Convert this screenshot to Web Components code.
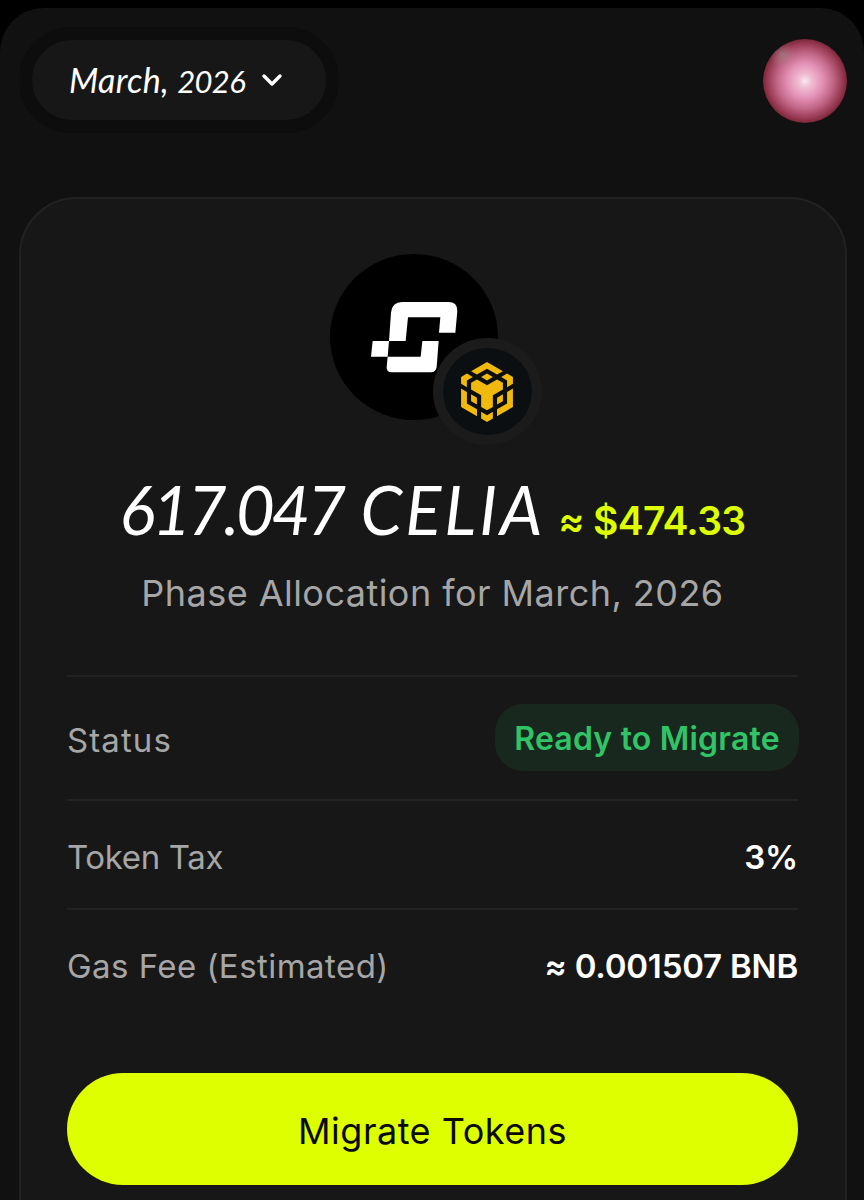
<!DOCTYPE html>
<html lang="en">
<head>
<meta charset="UTF-8" />
<meta name="viewport" content="width=device-width, initial-scale=1.0" />
<title>Migrate Tokens</title>
<style>
  body {
    margin: 0;
    background: #000;
    font-family: Inter, "Liberation Sans", sans-serif;
    color: #fff;
    height: 1200px;
    overflow: hidden;
  }
  .year { font-size: 31px; letter-spacing: -0.7px; }
  .unit { letter-spacing: 3px; margin-left: 5px; }
</style>
</head>
<body>
<app-shell>
  <month-picker slot="header">March, <span class="year">2026</span></month-picker>
  <user-avatar slot="header"></user-avatar>
  <allocation-card>
    <token-logo slot="logo"></token-logo>
    <token-amount slot="amount">617.047 <span class="unit">CELIA</span><span slot="value">≈ $474.33</span></token-amount>
    <span slot="caption">Phase Allocation for March, 2026</span>
    <info-row class="tall" label="Status" style="--ls: 1.1px"><status-pill>Ready to Migrate</status-pill></info-row>
    <info-row label="Token Tax" style="--ls: -0.35px">3%</info-row>
    <info-row label="Gas Fee (Estimated)" style="--ls: 0.45px">≈ 0.001507 BNB</info-row>
    <action-button slot="action">Migrate Tokens</action-button>
  </allocation-card>
</app-shell>

<script>
class AppShell extends HTMLElement {
  constructor() {
    super();
    this.attachShadow({ mode: 'open' }).innerHTML = `
      <style>
        :host {
          display: flex;
          flex-direction: column;
          box-sizing: border-box;
          height: 1192px;
          margin-top: 8px;
          padding: 19px 17px 0 19px;
          background: #111;
          border-radius: 44px 44px 0 0;
          overflow: hidden;
        }
        header {
          display: flex;
          justify-content: space-between;
          align-items: center;
          margin-bottom: 64px;
        }
      </style>
      <header><slot name="header"></slot></header>
      <slot></slot>
    `;
  }
}

class MonthPicker extends HTMLElement {
  constructor() {
    super();
    this.attachShadow({ mode: 'open' }).innerHTML = `
      <style>
        :host {
          display: flex;
          align-items: center;
          box-sizing: border-box;
          width: 320px;
          height: 106px;
          padding-left: 37px;
          border: 13px solid #0d0d0d;
          border-radius: 53px;
          background: #171717;
          font: italic 400 34px/40px Lato, sans-serif;
          letter-spacing: 0.3px;
        }
        span { width: 192px; white-space: nowrap; }
      </style>
      <span><slot></slot></span>
      <svg width="22" height="14" viewBox="0 0 22 14" fill="none" stroke="#fff" stroke-width="3.4" stroke-linecap="round" stroke-linejoin="round">
        <path d="M3 3l8 8 8-8" />
      </svg>
    `;
  }
}

class UserAvatar extends HTMLElement {
  constructor() {
    super();
    this.attachShadow({ mode: 'open' }).innerHTML = `
      <style>
        :host {
          display: block;
          width: 84px;
          height: 84px;
          margin-top: 1px;
          border-radius: 50%;
          background:
            radial-gradient(circle at 23% 19%, rgba(165, 140, 140, 0.6), transparent 14%),
            radial-gradient(circle closest-side, #fae8f0 0%, #f0bdd2 16%, #e290b4 42%, #c26787 66%, #9a3c57 88%, #7c2639 100%);
        }
      </style>
    `;
  }
}

class AllocationCard extends HTMLElement {
  constructor() {
    super();
    this.attachShadow({ mode: 'open' }).innerHTML = `
      <style>
        :host {
          display: flex;
          flex-direction: column;
          box-sizing: border-box;
          height: 1080px;
          flex: none;
          padding: 55px 47px 0 46px;
          border: 2px solid #222;
          border-radius: 58px;
          background: #171717;
        }
        .caption {
          margin: 22px 0 60px;
          text-align: center;
          font-size: 36px;
          line-height: 44px;
          letter-spacing: 0.46px;
          color: #a6a6a6;
          white-space: nowrap;
        }
        .rows { margin-bottom: 56px; }
      </style>
      <slot name="logo"></slot>
      <slot name="amount"></slot>
      <div class="caption"><slot name="caption"></slot></div>
      <div class="rows"><slot></slot></div>
      <slot name="action"></slot>
    `;
  }
}

class TokenLogo extends HTMLElement {
  constructor() {
    super();
    this.attachShadow({ mode: 'open' }).innerHTML = `
      <style>
        :host {
          display: block;
          position: relative;
          width: 168px;
          height: 166px;
          margin-left: 263px;
        }
        .token {
          display: block;
          border-radius: 50%;
          background: #000;
        }
        /* network badge over the corner of the token */
        .chain {
          position: absolute;
          left: 103px;
          top: 84px;
          display: flex;
          align-items: center;
          justify-content: center;
          box-sizing: border-box;
          width: 109px;
          height: 107px;
          padding-right: 1px;
          border: 10px solid #1b1b1b;
          border-radius: 50%;
          background: #0b0f11;
        }
      </style>
      <svg class="token" width="168" height="166" viewBox="30 41 504 498" fill="#fff">
        <path d="M207 302L213 217Q216 185 246 185H385Q413 185 412 213L406 277H357L361 231H264L257 302Z" />
        <path d="M158 302H207L203 349H153Z" />
        <path d="M203 349H302L307 302H356L350 380Q348 396 332 396H215Q199 396 200 380Z" />
      </svg>
      <div class="chain">
        <svg width="60" height="60" viewBox="0 0 24 24" fill="#f0b90b">
          <path d="M5.631 3.676 12.001 0l6.367 3.676-2.34 1.358L12 2.716 7.972 5.034l-2.34-1.358Zm12.737 4.636-2.34-1.358L12 9.272 7.972 6.954l-2.34 1.358v2.716l4.026 2.318v4.636L12 19.341l2.341-1.359v-4.636l4.027-2.318V8.312Zm0 7.352v-2.716l-2.34 1.358v2.716l2.34-1.358Zm1.663.96-4.027 2.318v2.717l6.368-3.677V10.63l-2.34 1.358v4.636Zm-2.34-10.63 2.34 1.358v2.716l2.341-1.358V5.994l-2.34-1.358-2.342 1.358ZM9.657 19.926v2.716L12 24l2.341-1.358v-2.716l-2.34 1.358-2.342-1.358Zm-4.027-4.262 2.34 1.358v-2.716l-2.34-1.358v2.716Zm4.027-9.67L12 7.352l2.341-1.358L12 4.636 9.658 5.994Zm-5.69 1.358 2.34-1.358-2.34-1.358-2.341 1.358V8.71l2.34 1.358V7.352Zm0 4.636L1.627 10.63v7.353l6.368 3.677v-2.717L3.968 16.624v-4.636Z" />
        </svg>
      </div>
    `;
  }
}

class TokenAmount extends HTMLElement {
  constructor() {
    super();
    this.attachShadow({ mode: 'open' }).innerHTML = `
      <style>
        :host {
          display: flex;
          align-items: baseline;
          justify-content: center;
          height: 80px;
          margin-top: 49px;
          gap: 13px;
          white-space: nowrap;
        }
        .amount {
          font: italic 400 67px/80px Lato, sans-serif;
          letter-spacing: -3.2px;
        }
        .value {
          font-size: 39px;
          font-weight: 600;
          letter-spacing: -0.7px;
          color: #deff00;
        }
      </style>
      <span class="amount"><slot></slot></span>
      <span class="value"><slot name="value"></slot></span>
    `;
  }
}

class InfoRow extends HTMLElement {
  constructor() {
    super();
    this.attachShadow({ mode: 'open' }).innerHTML = `
      <style>
        :host {
          display: flex;
          align-items: center;
          justify-content: space-between;
          box-sizing: border-box;
          height: 109px;
          padding-top: 4px;
          border-top: 2px solid #222;
          font-size: 33px;
          line-height: 40px;
          white-space: nowrap;
        }
        :host(.tall) { height: 124px; }
        .label {
          color: #a6a6a6;
          letter-spacing: var(--ls, 0);
        }
        .value {
          font-weight: 600;
          letter-spacing: -0.2px;
        }
      </style>
      <span class="label">${this.getAttribute('label')}</span>
      <span class="value"><slot></slot></span>
    `;
  }
}

class StatusPill extends HTMLElement {
  constructor() {
    super();
    this.attachShadow({ mode: 'open' }).innerHTML = `
      <style>
        :host {
          display: flex;
          align-items: center;
          justify-content: center;
          box-sizing: border-box;
          width: 304px;
          height: 67px;
          padding-top: 3px;
          border-radius: 28px;
          background: #19281f;
          color: #31c466;
          font-size: 32px;
          letter-spacing: 0.2px;
          margin: -5px -1px 0 0;
        }
      </style>
      <slot></slot>
    `;
  }
}

class ActionButton extends HTMLElement {
  constructor() {
    super();
    this.attachShadow({ mode: 'open' }).innerHTML = `
      <style>
        :host { display: block; }
        button {
          display: block;
          width: 100%;
          height: 112px;
          padding: 4px 0 0;
          border: 0;
          border-radius: 56px;
          background: #deff00;
          color: #0a0a0a;
          font: 400 36px/44px Inter, sans-serif;
          letter-spacing: 0.5px;
        }
      </style>
      <button><slot></slot></button>
    `;
  }
}

customElements.define('app-shell', AppShell);
customElements.define('month-picker', MonthPicker);
customElements.define('user-avatar', UserAvatar);
customElements.define('allocation-card', AllocationCard);
customElements.define('token-logo', TokenLogo);
customElements.define('token-amount', TokenAmount);
customElements.define('info-row', InfoRow);
customElements.define('status-pill', StatusPill);
customElements.define('action-button', ActionButton);
</script>
</body>
</html>
